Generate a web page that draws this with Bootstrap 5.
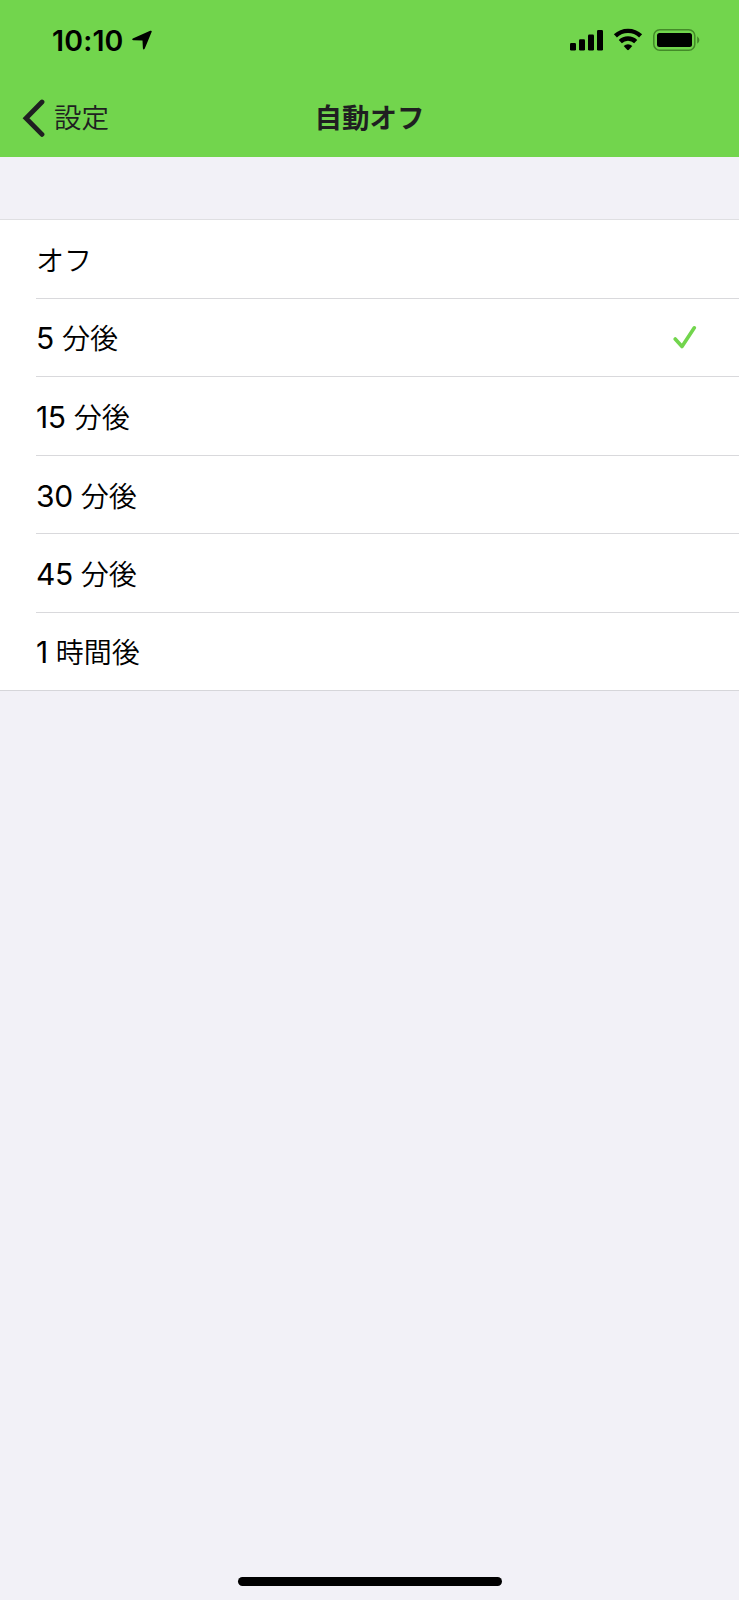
<!DOCTYPE html>
<html lang="ja">
<head>
<meta charset="utf-8">
<meta name="viewport" content="width=device-width, initial-scale=1">
<title>自動オフ</title>
<link href="https://cdn.jsdelivr.net/npm/bootstrap@5.3.0/dist/css/bootstrap.min.css" rel="stylesheet">
<style>
body{background:#f2f1f7;color:#000;font-family:Inter,"Noto Sans CJK JP",sans-serif;min-height:1600px}
.top-area{background:#72d54d;height:157px}
.status{height:80px;padding:0 38px 0 52px}
.clock{font-size:28.5px;font-weight:600;line-height:34px;letter-spacing:.15px;padding-top:2px}
.title-row{height:77px;color:#1f1f21}
.back{color:inherit;font-size:27.5px;font-weight:350;padding-left:22px;line-height:40px}
.back span,.heading{padding-bottom:1px}
.heading{font-size:27.5px;font-weight:700;line-height:40px}
.options{margin-top:62px;border-top:1px solid #dfdfe2;border-bottom:1px solid #d6d6da}
.options .list-group-item{height:78.6px;padding:0 0 0 36px;border:0;color:#000;background:#fff}
.options .list-group-item:last-child{height:77px}
.line{border-bottom:1px solid #d9d9dc;padding-right:42px}
.list-group-item:last-child .line{border-bottom:0}
.label-text{line-height:40px;font-size:30px;white-space:pre;letter-spacing:-.4px;padding-top:3px}
.ja{font-size:28px;font-weight:350;letter-spacing:0}
.home{width:264px;height:9px;background:#000;margin-bottom:14px}
</style>
</head>
<body class="d-flex flex-column">
<header class="top-area">
  <div class="status d-flex align-items-center justify-content-between">
    <div class="d-flex align-items-center">
      <span class="clock">10:10</span>
      <svg class="ms-2" width="20" height="20" viewBox="0 0 20 20"><path d="M.8 8.6 18.2.8Q20.2.2 19.6 2L12.8 18.4Q11.4 20.6 10.9 18.3L10.5 10.6 1.4 10.3Q-.6 9.8.8 8.6Z"/></svg>
    </div>
    <svg width="132" height="24" viewBox="0 0 132 24">
      <g><rect x="1" y="15" width="6" height="7.5" rx="1.2"/><rect x="10" y="11.3" width="6" height="11.2" rx="1.2"/><rect x="19" y="6.5" width="6" height="16" rx="1.2"/><rect x="28" y="2" width="6" height="20.5" rx="1.2"/></g>
      <g fill="none" stroke="#000" stroke-width="4.4"><path d="M46.4 7.9a18.2 18.2 0 0 1 25.2 0"/><path d="M51.3 13.6a11 11 0 0 1 15.4 0"/></g>
      <path d="M54.7 17.9a6.4 6.4 0 0 1 8.6 0L59.9 21.8Q59 22.7 58.1 21.8Z"/>
      <rect x="84.8" y="1.8" width="41" height="20.4" rx="6" fill="none" stroke="#438a28" stroke-width="1.5"/>
      <rect x="88" y="5" width="35" height="14" rx="2.5"/>
      <path d="M128.2 8.2q4.4 3.8 0 7.6Z" fill="#438a28"/>
    </svg>
  </div>
  <nav class="title-row row g-0 align-items-center">
    <div class="col-4"><a href="#" class="back d-flex align-items-center text-decoration-none">
      <svg width="24" height="39" viewBox="0 0 24 39"><path d="M20 3 4 19.2 20 35.4" fill="none" stroke="#1f1f21" stroke-width="4.8" stroke-linecap="round"/></svg>
      <span class="ms-2">設定</span></a></div>
    <h1 class="heading col-4 text-center m-0">自動オフ</h1>
  </nav>
</header>
<main class="flex-grow-1">
  <ul class="options list-group list-group-flush">
    <li class="list-group-item"><div class="line h-100 d-flex align-items-center"><span class="label-text"><span class="ja">オフ</span></span></div></li>
    <li class="list-group-item"><div class="line h-100 d-flex align-items-center justify-content-between"><span class="label-text">5 <span class="ja">分後</span></span>
      <svg width="24" height="24" viewBox="0 0 24 24"><path d="M2.2 14 9 21.5 21.3 2.8" fill="none" stroke="#72d54d" stroke-width="3.6" stroke-linecap="round" stroke-linejoin="round"/></svg></div></li>
    <li class="list-group-item"><div class="line h-100 d-flex align-items-center"><span class="label-text">15 <span class="ja">分後</span></span></div></li>
    <li class="list-group-item"><div class="line h-100 d-flex align-items-center"><span class="label-text">30 <span class="ja">分後</span></span></div></li>
    <li class="list-group-item"><div class="line h-100 d-flex align-items-center"><span class="label-text">45 <span class="ja">分後</span></span></div></li>
    <li class="list-group-item"><div class="line h-100 d-flex align-items-center"><span class="label-text">1 <span class="ja">時間後</span></span></div></li>
  </ul>
</main>
<footer class="d-flex justify-content-center"><div class="home rounded-pill"></div></footer>
<script src="https://cdn.jsdelivr.net/npm/bootstrap@5.3.0/dist/js/bootstrap.bundle.min.js"></script>
</body>
</html>
